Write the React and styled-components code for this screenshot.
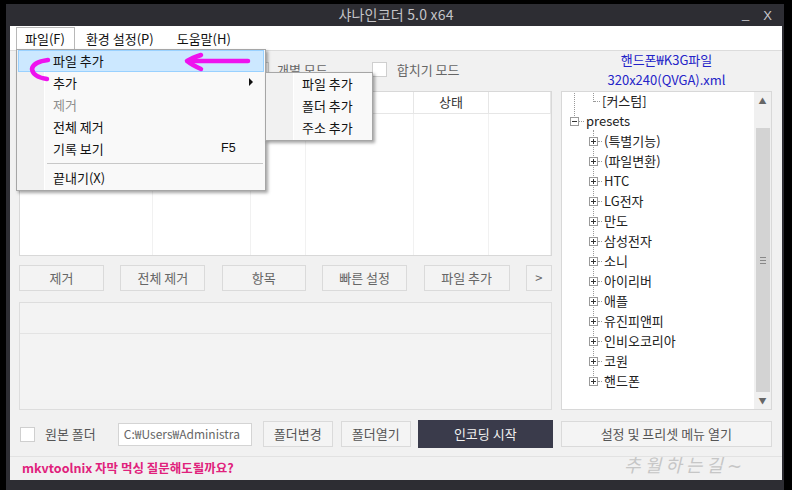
import React from 'react'
import styled, { createGlobalStyle } from 'styled-components'

const GlobalStyle = createGlobalStyle`
  html, body {
    margin: 0;
    padding: 0;
    background: #000;
  }
  body {
    font-family: "Noto Sans CJK KR", "Noto Sans", sans-serif;
    font-size: 13px;
    color: #222;
  }
  * { box-sizing: border-box; }
`

const Page = styled.div`
  position: relative;
  width: 792px;
  height: 490px;
  padding: 4px 8px 0 6px;
  overflow: hidden;
`

const Frame = styled.div`
  position: relative;
  height: 486px;
  background: #2d2d33;
  padding: 0 2px 10px 4px;
  display: flex;
  flex-direction: column;
`

const TitleBar = styled.div`
  height: 22px;
  display: grid;
  grid-template-columns: 1fr auto 1fr;
  align-items: center;
  color: #c4c4c8;
  font-size: 14px;
`

const Title = styled.div`
  grid-column: 2;
  letter-spacing: 0.2px;
  padding-bottom: 2px;
`

const Controls = styled.div`
  grid-column: 3;
  justify-self: end;
  display: flex;
  gap: 14px;
  padding-right: 10px;
  font-family: "Liberation Sans", sans-serif;
  font-size: 13px;
  color: #c8c8cc;
  span:first-child { margin-top: -2px; }
`

const Client = styled.div`
  flex: 1;
  background: #f1f1f1;
  display: flex;
  flex-direction: column;
`

const MenuBar = styled.div`
  height: 25px;
  background: #fff;
  border-bottom: 1px solid #dcdcdc;
  display: flex;
  align-items: flex-end;
  padding-left: 6px;
`

const TopMenu = styled.div`
  height: 23px;
  padding: 0 9px 2px 8px;
  display: flex;
  align-items: center;
  margin-right: ${p => p.$gap || 0}px;
  border: 1px solid ${p => (p.$open ? '#b8b8b8' : 'transparent')};
  border-bottom: none;
  color: #111;
`

const Body = styled.div`
  display: grid;
  grid-template-columns: 533px 211px;
  grid-template-rows: 40px 319px;
  column-gap: 9px;
  padding: 0 10px 0 9px;
`

const ModeRow = styled.div`
  display: flex;
  align-items: center;
  padding: 0 0 3px 235px;
  color: #666;
`

const Check = styled.span`
  display: inline-block;
  width: 15px;
  height: 15px;
  background: #fff;
  border: 1px solid #cfcfcf;
  margin-right: ${p => p.$mr || 8}px;
  flex-shrink: 0;
`

const ModeLabel = styled.span`
  margin-right: ${p => p.$mr || 0}px;
`

const PresetName = styled.div`
  display: flex;
  flex-direction: column;
  align-items: center;
  justify-content: center;
  color: #2424c8;
  line-height: 20px;
  padding-bottom: 3px;
`

const LeftCol = styled.div`
  display: flex;
  flex-direction: column;
`

const List = styled.div`
  height: 165px;
  background: #fff;
  border: 1px solid #d8d8d8;
  display: flex;
  flex-direction: column;
`

const cols = '133px 98px 55px 108px 75px 1fr'

const ListHead = styled.div`
  height: 22px;
  display: grid;
  grid-template-columns: ${cols};
  border-bottom: 1px solid #e6e6e6;
`

const HeadCell = styled.div`
  border-right: 1px solid #e6e6e6;
  display: flex;
  align-items: center;
  justify-content: center;
  padding-bottom: 2px;
  color: #333;
`

const ListBody = styled.div`
  flex: 1;
  display: grid;
  grid-template-columns: ${cols};
`

const BodyCell = styled.div`
  border-right: 1px solid #f1f1f1;
`

const ButtonRow = styled.div`
  display: flex;
  justify-content: space-between;
  margin-top: 9px;
  height: 26px;
`

const FlatButton = styled.div`
  width: ${p => p.$w || 85}px;
  height: 100%;
  background: #f3f3f3;
  border: 1px solid #dadada;
  display: flex;
  align-items: center;
  justify-content: center;
  padding-bottom: 1px;
  color: #666;
  flex-shrink: 0;
`

const Panel = styled.div`
  margin-top: 11px;
  height: 108px;
  background: #f3f3f3;
  border: 1px solid #dddddd;
  display: flex;
  flex-direction: column;
`

const PanelHead = styled.div`
  height: 31px;
  border-bottom: 1px solid #e3e3e3;
`

const Tree = styled.div`
  background: #fff;
  border: 1px solid #d8d8d8;
  display: flex;
  overflow: hidden;
`

const TreeItems = styled.div`
  flex: 1;
  margin-top: -2px;
  position: relative;
`

const Row = styled.div`
  height: 20px;
  display: flex;
  align-items: center;
  padding-left: ${p => p.$indent}px;
  color: #222;
  white-space: nowrap;
  position: relative;
`

const Box = styled.span`
  width: 9px;
  height: 9px;
  border: 1px solid #9a9a9a;
  background: #fff;
  position: relative;
  flex-shrink: 0;
  margin-top: 2px;
  &::before {
    content: '';
    position: absolute;
    left: 1px;
    right: 1px;
    top: 3px;
    height: 1px;
    background: #333;
  }
  &::after {
    content: '';
    display: ${p => (p.$plus ? 'block' : 'none')};
    position: absolute;
    top: 1px;
    bottom: 1px;
    left: 3px;
    width: 1px;
    background: #333;
  }
`

const Dots = styled.span`
  width: ${p => p.$w}px;
  border-top: 1px dotted #999;
  margin: 2px 2px 0 0;
  flex-shrink: 0;
`

const VLine = styled.span`
  position: absolute;
  left: ${p => p.$x}px;
  top: ${p => p.$top}px;
  height: ${p => p.$h}px;
  border-left: 1px dotted #999;
`

const ScrollBar = styled.div`
  width: 17px;
  background: #f0f0f0;
  display: flex;
  flex-direction: column;
  align-items: center;
  color: #666;
  font-size: 8px;
`

const ScrollArrow = styled.div`
  height: 17px;
  display: flex;
  align-items: center;
  justify-content: center;
`

const Thumb = styled.div`
  flex: 1;
  width: 14px;
  margin: 19px 0 0;
  background: #d3d3d3;
  display: flex;
  align-items: center;
  justify-content: center;
  &::after {
    content: '';
    width: 6px;
    height: 5px;
    border-top: 1px solid #888;
    border-bottom: 1px solid #888;
    background: linear-gradient(#888, #888) center / 100% 1px no-repeat;
  }
`

const BottomRow = styled.div`
  display: flex;
  align-items: center;
  padding: 0 8px 0 10px;
  margin-top: 10px;
  height: 28px;
`

const Label = styled.span`
  color: #555;
  margin-right: 22px;
  padding-bottom: 2px;
`

const PathInput = styled.div`
  width: 134px;
  height: 23px;
  background: #fff;
  border: 1px solid #d4d4d4;
  color: #666;
  font-size: 12px;
  padding: 0 0 1px 5px;
  display: flex;
  align-items: center;
  overflow: hidden;
  white-space: nowrap;
  margin-right: 11px;
`

const SmallButton = styled.div`
  width: ${p => p.$w}px;
  height: ${p => p.$h || 26}px;
  margin-right: ${p => p.$mr || 0}px;
  background: ${p => (p.$dark ? '#3a3b4b' : '#f4f4f4')};
  border: 1px solid ${p => (p.$dark ? '#3a3b4b' : '#dadada')};
  color: ${p => (p.$dark ? '#f2f2f2' : '#555')};
  display: flex;
  align-items: center;
  justify-content: center;
  padding-bottom: 1px;
  flex-shrink: 0;
`

const StatusBar = styled.div`
  margin-top: 8px;
  border-top: 1px solid #e2e2e2;
  flex: 1;
  display: flex;
  align-items: center;
  justify-content: space-between;
  padding: 0 36px 2px 12px;
`

const StatusText = styled.span`
  color: #e0217c;
  font-weight: bold;
  font-size: 12.5px;
`

const Watermark = styled.span`
  color: #c6c6c6;
  font-family: "DejaVu Serif", "Noto Sans CJK KR", serif;
  font-size: 18px;
  font-style: italic;
  letter-spacing: 4px;
  margin-top: -8px;
`

/* dropdown menus lie over the window */
const Menu = styled.div`
  position: absolute;
  left: ${p => p.$x}px;
  top: ${p => p.$y}px;
  width: ${p => p.$w}px;
  background: #f9f9f9;
  border: 1px solid #a6a6a6;
  box-shadow: 2px 2px 3px rgba(0, 0, 0, 0.35);
  padding: 0 0 1px;
  background-image: linear-gradient(to right, #f1f1f1 0, #f1f1f1 27px, #fff 27px, #fff 28px, transparent 28px);
`

const Item = styled.div`
  height: 22px;
  margin: 0 1px;
  padding: 0 0 2px 34px;
  display: flex;
  align-items: center;
  color: ${p => (p.$disabled ? '#8e8e8e' : '#111')};
  background: ${p => (p.$active ? '#cce8ff' : 'transparent')};
  border: 1px solid ${p => (p.$active ? '#99d1ff' : 'transparent')};
  position: relative;
`

const Shortcut = styled.span`
  position: absolute;
  left: 202px;
  font-family: "Liberation Sans", sans-serif;
  font-size: 12.5px;
`

const SubArrow = styled.span`
  position: absolute;
  right: 10px;
  width: 0;
  height: 0;
  border-top: 4px solid transparent;
  border-bottom: 4px solid transparent;
  border-left: 4px solid #111;
`

const Separator = styled.div`
  height: 7px;
  margin-left: 30px;
  margin-right: 2px;
  display: flex;
  align-items: center;
  &::after {
    content: '';
    flex: 1;
    height: 1px;
    background: #c8c8c8;
  }
`

const Marks = styled.svg`
  position: absolute;
  left: 0;
  top: 0;
  pointer-events: none;
`

const treeChildren = [
  '(특별기능)', '(파일변환)', 'HTC', 'LG전자', '만도', '삼성전자', '소니',
  '아이리버', '애플', '유진피앤피', '인비오코리아', '코원', '핸드폰',
]

export default function App() {
  return (
    <Page>
      <GlobalStyle />
      <Frame>
        <TitleBar>
          <Title>샤나인코더 5.0 x64</Title>
          <Controls>
            <span>_</span>
            <span>X</span>
          </Controls>
        </TitleBar>
        <Client>
          <MenuBar>
            <TopMenu $open $gap={2}>파일(F)</TopMenu>
            <TopMenu $gap={4}>환경 설정(P)</TopMenu>
            <TopMenu>도움말(H)</TopMenu>
          </MenuBar>
          <Body>
            <ModeRow>
              <Check />
              <ModeLabel $mr={44}>개별 모드</ModeLabel>
              <Check $mr={10} />
              <ModeLabel>합치기 모드</ModeLabel>
            </ModeRow>
            <PresetName>
              <span>핸드폰₩K3G파일</span>
              <span>320x240(QVGA).xml</span>
            </PresetName>
            <LeftCol>
              <List>
                <ListHead>
                  <HeadCell>파일명</HeadCell>
                  <HeadCell>형식</HeadCell>
                  <HeadCell>길이</HeadCell>
                  <HeadCell>출력</HeadCell>
                  <HeadCell>상태</HeadCell>
                  <HeadCell />
                </ListHead>
                <ListBody>
                  <BodyCell />
                  <BodyCell />
                  <BodyCell />
                  <BodyCell />
                  <BodyCell />
                  <BodyCell />
                </ListBody>
              </List>
              <ButtonRow>
                <FlatButton>제거</FlatButton>
                <FlatButton>전체 제거</FlatButton>
                <FlatButton $w={84}>항목</FlatButton>
                <FlatButton>빠른 설정</FlatButton>
                <FlatButton $w={86}>파일 추가</FlatButton>
                <FlatButton $w={26}>&gt;</FlatButton>
              </ButtonRow>
              <Panel>
                <PanelHead />
              </Panel>
            </LeftCol>
            <Tree>
              <TreeItems>
                <VLine $x={12} $top={0} $h={28} />
                <VLine $x={31} $top={0} $h={12} />
                <VLine $x={31} $top={40} $h={252} />
                <Row $indent={32}>
                  <Dots $w={6} />
                  [커스텀]
                </Row>
                <Row $indent={8}>
                  <Box />
                  <Dots $w={5} />
                  presets
                </Row>
                {treeChildren.map(name => (
                  <Row key={name} $indent={27}>
                    <Box $plus />
                    <Dots $w={4} />
                    {name}
                  </Row>
                ))}
              </TreeItems>
              <ScrollBar>
                <ScrollArrow>▲</ScrollArrow>
                <Thumb />
                <ScrollArrow>▼</ScrollArrow>
              </ScrollBar>
            </Tree>
          </Body>
          <BottomRow>
            <Check $mr={10} />
            <Label>원본 폴더</Label>
            <PathInput>C:₩Users₩Administra</PathInput>
            <SmallButton $w={70} $mr={8}>폴더변경</SmallButton>
            <SmallButton $w={70} $mr={7}>폴더열기</SmallButton>
            <SmallButton $w={135} $h={28} $mr={8} $dark>인코딩 시작</SmallButton>
            <SmallButton $w={211}>설정 및 프리셋 메뉴 열기</SmallButton>
          </BottomRow>
          <StatusBar>
            <StatusText>mkvtoolnix 자막 먹싱 질문해도될까요?</StatusText>
            <Watermark>추월하는길~</Watermark>
          </StatusBar>
        </Client>
        <Menu $x={10} $y={45} $w={250}>
          <Item $active>파일 추가</Item>
          <Item>
            추가
            <SubArrow />
          </Item>
          <Item $disabled>제거</Item>
          <Item>전체 제거</Item>
          <Item>
            기록 보기
            <Shortcut>F5</Shortcut>
          </Item>
          <Separator />
          <Item>끝내기(X)</Item>
        </Menu>
        <Menu $x={259} $y={68} $w={108}>
          <Item>파일 추가</Item>
          <Item>폴더 추가</Item>
          <Item>주소 추가</Item>
        </Menu>
      </Frame>
      <Marks width="792" height="490" viewBox="0 0 792 490">
        <g fill="none" stroke="#ee12ee" strokeWidth="4.5" strokeLinecap="round" strokeLinejoin="round">
          <path d="M248 61 L190 61" />
          <path d="M201 55 Q192 58 187 61 Q192 65 201 69" />
          <path d="M48 60 Q33 62 32 69 Q33 77 47 79" />
        </g>
      </Marks>
    </Page>
  )
}
